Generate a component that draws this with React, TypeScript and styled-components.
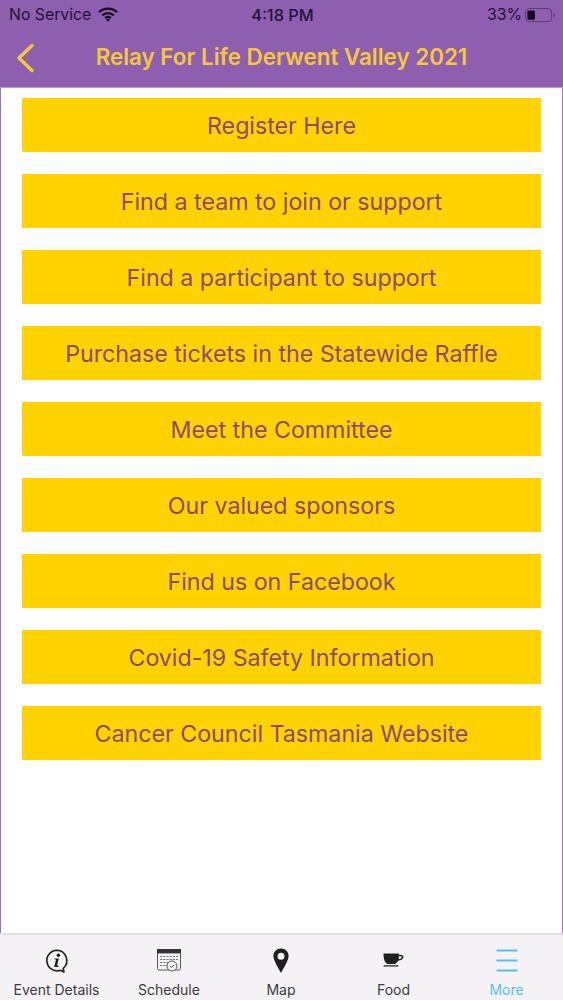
import React from "react";
import styled, { createGlobalStyle } from "styled-components";

const Global = createGlobalStyle`
  html, body { margin: 0; padding: 0; background: #fff; }
  * { box-sizing: border-box; }
`;

const Page = styled.div`
  width: 563px;
  height: 1000px;
  display: flex;
  flex-direction: column;
  overflow: hidden;
  font-family: Inter, "Liberation Sans", sans-serif;
`;

const Header = styled.header`
  height: 88px;
  flex: none;
  background: #8e5fae;
  border-bottom: 1px solid #b79bc9;
  display: flex;
  flex-direction: column;
`;

const StatusBar = styled.div`
  height: 29px;
  padding: 0 7px 0 9px;
  display: grid;
  grid-template-columns: 1fr auto 1fr;
  align-items: center;
  color: #23123a;
  font-size: 15.8px;
`;

const StatusLeft = styled.div`
  display: flex;
  align-items: center;
  gap: 7px;
`;

const StatusTime = styled.div`
  font-weight: 500;
  font-size: 16.4px;
`;

const StatusRight = styled.div`
  display: flex;
  align-items: center;
  justify-content: flex-end;
  gap: 3px;
`;

const NavBar = styled.div`
  flex: 1;
  display: flex;
  align-items: center;
  justify-content: center;
  position: relative;
`;

const BackIcon = styled.svg`
  position: absolute;
  left: 16px;
  top: 14px;
  width: 19px;
  height: 30px;
`;

const Title = styled.h1`
  margin: -3px 0 0;
  font-size: 22.4px;
  font-weight: 600;
  color: #f5c83c;
`;

const Content = styled.main`
  flex: 1;
  background: #fff;
  border-left: 1px solid #9b75b8;
  border-right: 1px solid #9b75b8;
  padding: 10px 21px 0;
  display: flex;
  flex-direction: column;
  gap: 22px;
`;

const LinkButton = styled.a`
  height: 54px;
  padding-top: 1px;
  background: #ffd200;
  color: #8d4a6e;
  font-size: 23.2px;
  display: flex;
  align-items: center;
  justify-content: center;
`;

const TabBar = styled.nav`
  height: 67px;
  flex: none;
  background: #f4f2f5;
  border-top: 2px solid #e2e0e4;
  display: grid;
  grid-template-columns: 113px 112px 112px 113px 113px;
`;

const Tab = styled.div<{ $active?: boolean }>`
  display: flex;
  flex-direction: column;
  align-items: center;
  padding-top: 11px;
  color: ${(p) => (p.$active ? "#5bbdee" : "#3c3b40")};
  font-size: 14px;
`;

const TabIcon = styled.svg`
  width: 30px;
  height: 30px;
  display: block;
`;

const TabLabel = styled.span`
  margin-top: 5px;
  line-height: 18px;
`;

const links = [
  "Register Here",
  "Find a team to join or support",
  "Find a participant to support",
  "Purchase tickets in the Statewide Raffle",
  "Meet the Committee",
  "Our valued sponsors",
  "Find us on Facebook",
  "Covid-19 Safety Information",
  "Cancer Council Tasmania Website",
];

export default function App() {
  return (
    <Page>
      <Global />
      <Header>
        <StatusBar>
          <StatusLeft>
            <span>No Service</span>
            <svg width="20" height="15" viewBox="0 0 20 15" fill="none" stroke="#160c24" strokeWidth="2.4">
              <path d="M1 5.200a13 13 0 0 1 18 0" />
              <path d="M4.200 8.400a8.500 8.500 0 0 1 11.600 0" />
              <path d="M7.200 11.200a4 4 0 0 1 5.600 0" />
              <path d="M10 14.800l-2-2.200a3 3 0 0 1 4 0z" fill="#160c24" stroke="none" />
            </svg>
          </StatusLeft>
          <StatusTime>4:18 PM</StatusTime>
          <StatusRight>
            <span>33%</span>
            <svg width="31" height="16" viewBox="0 0 31 16">
              <rect x="0.600" y="1.600" width="26" height="13" rx="3.600" fill="none" stroke="#5b3a78" strokeWidth="1" />
              <rect x="2.400" y="3.400" width="7.500" height="9.400" rx="1.600" fill="#120a1c" />
              <path d="M28.500 6v4.400a2.400 2.400 0 0 0 0-4.400z" fill="#5b3a78" />
            </svg>
          </StatusRight>
        </StatusBar>
        <NavBar>
          <BackIcon viewBox="0 0 19 30" fill="none" stroke="#f5c83c" strokeWidth="3.400" strokeLinecap="round" strokeLinejoin="round">
            <path d="M16 2.500L3 15l13 12.500" />
          </BackIcon>
          <Title>Relay For Life Derwent Valley 2021</Title>
        </NavBar>
      </Header>
      <Content>
        {links.map((l) => (
          <LinkButton key={l}>{l}</LinkButton>
        ))}
      </Content>
      <TabBar>
        <Tab>
          <TabIcon viewBox="0 0 30 30">
            <path d="M15 4.200a10.300 10.300 0 1 0 3.600 20l3.400 1.800-.8-3.700A10.300 10.300 0 0 0 15 4.200z" fill="none" stroke="#1f1e22" strokeWidth="1.600" strokeLinejoin="round" />
            <circle cx="16.400" cy="9.200" r="1.700" fill="#1f1e22" />
            <path d="M12.400 12.600h4.400l-1.600 6.400q-.2 1 1.200 .7v1.200h-4.200l1.700-6.900q.1-.9-1.500-.7z" fill="#1f1e22" />
          </TabIcon>
          <TabLabel>Event Details</TabLabel>
        </Tab>
        <Tab>
          <TabIcon viewBox="0 0 30 30">
            <rect x="3.500" y="3.500" width="23" height="20.500" rx="1.500" fill="none" stroke="#55545a" strokeWidth="1" />
            <rect x="3" y="3" width="24" height="4.400" fill="#333237" />
            <path d="M6 10.500h18M6 13.500h18M6 16.500h11M6 19.500h9" stroke="#77767c" strokeWidth="1.100" strokeDasharray="2.200 1" />
            <circle cx="18" cy="20" r="5" fill="#f4f2f5" stroke="#55545a" strokeWidth="1" />
            <path d="M15.800 20l1.600 1.600 2.800-3" fill="none" stroke="#55545a" strokeWidth="1" />
          </TabIcon>
          <TabLabel>Schedule</TabLabel>
        </Tab>
        <Tab>
          <TabIcon viewBox="0 0 30 30">
            <path fillRule="evenodd" d="M15 2.600c-4.300 0-7.600 3.300-7.600 7.500 0 3.900 4.500 11.500 7.600 16.800 3.100-5.300 7.600-12.900 7.600-16.800 0-4.200-3.300-7.500-7.600-7.500zm0 4.100a3.500 3.500 0 1 1 0 7 3.500 3.500 0 0 1 0-7z" fill="#1f1e22" />
          </TabIcon>
          <TabLabel>Map</TabLabel>
        </Tab>
        <Tab>
          <TabIcon viewBox="0 0 30 30">
            <path fillRule="evenodd" d="M4.500 7.500h15.300v1.200h1.200c2.200 0 3.500 1 3.500 2.400 0 2-2.400 3.300-5.300 3.700-.9 1.600-2 2.700-3.400 3.200H8.500c-2.500-1-4-4.500-4-10.500zm15.300 2.800v2.900c1.800-.3 2.900-1 2.900-1.900 0-.6-.7-1-1.800-1z" fill="#1f1e22" />
            <rect x="4.500" y="19.200" width="15" height="1.400" rx=".7" fill="#1f1e22" />
          </TabIcon>
          <TabLabel>Food</TabLabel>
        </Tab>
        <Tab $active>
          <TabIcon viewBox="0 0 30 30">
            <path d="M4.500 4.500h21M4.500 14.500h21M4.500 24.500h21" stroke="#5bbdee" strokeWidth="2" />
          </TabIcon>
          <TabLabel>More</TabLabel>
        </Tab>
      </TabBar>
    </Page>
  );
}
